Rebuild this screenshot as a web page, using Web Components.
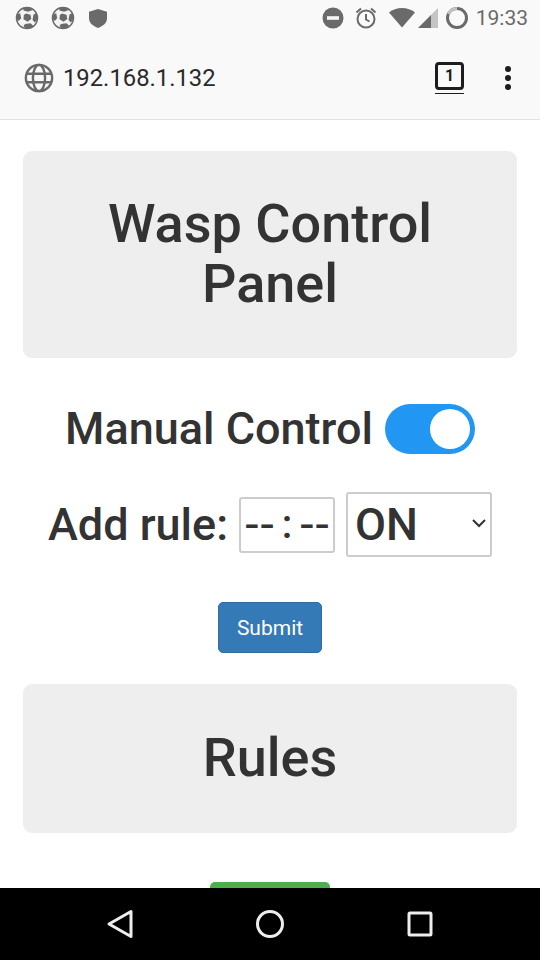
<!DOCTYPE html>
<html>
<head>
<meta charset="utf-8">
<style>
    html, body { margin: 0; padding: 0; }
    body {
        width: 540px;
        height: 960px;
        display: flex;
        flex-direction: column;
        overflow: hidden;
        background: white;
        font-family: Roboto, sans-serif;
    }
    page-content { flex: 1; min-height: 0; }
</style>
</head>
<body>
<status-bar></status-bar>
<url-bar address="192.168.1.132" tabs="1"></url-bar>
<page-content>
    <title-card size="big">Wasp Control<br>Panel</title-card>
    <manual-toggle>Manual Control</manual-toggle>
    <rule-form></rule-form>
    <title-card size="small">Rules</title-card>
    <rule-list></rule-list>
</page-content>
<nav-bar></nav-bar>

<script>
// white ball, dark patches
const BALL = `<svg width="24" height="24" viewBox="0 0 24 24">
    <circle cx="12" cy="12" r="10.500" fill="#f4f4f4" stroke="#6a6a6a" stroke-width="1.500"/>
    <path fill="#6a6a6a" d="M11 7.500l4.500 1.300.8 4.300-3.800 2.700-4-2.600.300-4.300z"/>
    <path fill="#6a6a6a" d="M8 1.800l7.500-.2 1.800 2.700-4.300 1.400-4.500-1.200zM1.800 8.500l3.400-1.200 1 5-2.500 2.600-2-2zM21.500 7l1 6-2.600 3.500-2.400-2.500 1-5.500zM10 18l5.500-.8 2.500 2.300-2 2.500-5.500.2-2-2.200z"/>
</svg>`;

class StatusBar extends HTMLElement {
    constructor(){
        super();
        this.attachShadow({mode: "open"});
    }
    connectedCallback(){
        this.shadowRoot.innerHTML = `
            <style>
                :host{
                    display: flex;
                    flex: none;
                    height: 36px;
                    align-items: center;
                    justify-content: space-between;
                    padding: 0 12px 0 15px;
                    background: #f9f9f9;
                    color: #6a6a6a;
                }
                .side{ display: flex; align-items: center; }
                svg{ display: block; }
                .time{ font: 400 21px Roboto, sans-serif; margin-left: 7px; }
            </style>
            <div class="side" style="gap:12px">
                ${BALL}${BALL}
                <svg width="22" height="24" viewBox="0 0 22 24"><path fill="#6a6a6a" d="M11 3l9 2.800v6.700c0 4.300-4 7.700-9 9.500-5-1.800-9-5.200-9-9.500V5.800z"/></svg>
            </div>
            <div class="side">
                <svg width="24" height="24" viewBox="0 0 24 24"><circle cx="12" cy="12" r="10.500" fill="#6a6a6a"/><rect x="6" y="10.200" width="12" height="3.600" fill="#f5f5f5"/></svg>
                <svg style="margin-left:9px" width="24" height="24" viewBox="0 0 24 24" fill="none" stroke="#6a6a6a" stroke-width="2"><circle cx="12" cy="13" r="8.500"/><path d="M12 8v5.500l3.500 2"/><path d="M2.500 6.500L7 2.500M21.500 6.500L17 2.500"/></svg>
                <svg style="margin-left:10px" width="28" height="22" viewBox="0 0 28 22"><path fill="#6a6a6a" d="M1 5.500C4.500 2.500 9 1 14 1s9.500 1.500 13 4.500L14 20.500z"/></svg>
                <svg style="margin-left:1px" width="22" height="22" viewBox="0 0 22 22"><path fill="#c4c4c4" d="M21 1v20H13V9z"/><path fill="#6a6a6a" d="M14 8v13H1z"/></svg>
                <svg style="margin-left:6px" width="24" height="24" viewBox="0 0 24 24" fill="none" stroke-width="3"><circle cx="12" cy="12" r="9.500" stroke="#6a6a6a"/><path d="M12 2.500A9.500 9.500 0 0 0 3.500 8" stroke="#c4c4c4"/></svg>
                <span class="time">19:33</span>
            </div>
        `;
    }
}

class UrlBar extends HTMLElement {
    constructor(){
        super();
        this.attachShadow({mode: "open"});
    }
    connectedCallback(){
        this.shadowRoot.innerHTML = `
            <style>
                :host{
                    display: flex;
                    flex: none;
                    box-sizing: border-box;
                    height: 84px;
                    align-items: center;
                    padding: 0 0 0 24px;
                    background: #f9f9f9;
                    border-bottom: 1px solid #e2e2e2;
                }
                svg{ display: block; flex: none; }
                .address{
                    flex: 1;
                    margin-left: 9px;
                    font: 400 23.800px Roboto, sans-serif;
                    color: #2a2a2a;
                }
                .tabs{
                    position: relative;
                    box-sizing: border-box;
                    width: 29px;
                    height: 28px;
                    margin-top: -4px;
                    border: 3px solid #1d1d1d;
                    border-radius: 4px;
                    display: grid;
                    place-items: center;
                    font: 700 16px Roboto, sans-serif;
                    color: #1d1d1d;
                }
                .tabs::after{
                    content: "";
                    position: absolute;
                    left: -3px;
                    right: -3px;
                    bottom: -7px;
                    height: 1px;
                    background: #1d1d1d;
                }
                .dots{ margin: 0 28px 0 40px; }
            </style>
            <svg width="30" height="30" viewBox="0 0 32 32" fill="none" stroke="#6a6a6a" stroke-width="2.600">
                <circle cx="16" cy="16" r="14"/>
                <ellipse cx="16" cy="16" rx="6.500" ry="14"/>
                <path d="M3 11.500h26M3 20.500h26"/>
            </svg>
            <span class="address">${this.getAttribute("address")}</span>
            <div class="tabs">${this.getAttribute("tabs")}</div>
            <svg class="dots" width="8" height="26" viewBox="0 0 8 26" fill="#1d1d1d"><circle cx="4" cy="4" r="3"/><circle cx="4" cy="13" r="3"/><circle cx="4" cy="22" r="3"/></svg>
        `;
    }
}

class PageContent extends HTMLElement {
    constructor(){
        super();
        this.attachShadow({mode: "open"});
    }
    connectedCallback(){
        this.shadowRoot.innerHTML = `
            <style>
                :host{
                    display: flex;
                    flex-direction: column;
                    box-sizing: border-box;
                    padding: 31px 23px 0;
                    overflow: hidden;
                    color: #333;
                    background: white;
                }
            </style>
            <slot></slot>
        `;
    }
}

class TitleCard extends HTMLElement {
    constructor(){
        super();
        this.attachShadow({mode: "open"});
    }
    connectedCallback(){
        this.shadowRoot.innerHTML = `
            <style>
                :host{
                    display: block;
                    flex: none;
                    background: #eee;
                    border-radius: 9px;
                    text-align: center;
                    font: 500 54px/60px Roboto, sans-serif;
                    color: #333;
                }
                :host([size="big"]){ padding: 43px 0 44px; margin-bottom: 42px; }
                :host([size="small"]){ padding: 44px 0 45px; }
            </style>
            <slot></slot>
        `;
    }
}

class ManualToggle extends HTMLElement {
    constructor(){
        super();
        this.attachShadow({mode: "open"});
    }
    connectedCallback(){
        this.shadowRoot.innerHTML = `
            <style>
                :host{
                    display: flex;
                    flex: none;
                    box-sizing: border-box;
                    height: 58px;
                    padding-bottom: 2px;
                    align-items: center;
                    justify-content: center;
                    gap: 12px;
                    font: 500 45px Roboto, sans-serif;
                    color: #333;
                }
                .track{
                    position: relative;
                    width: 90px;
                    height: 50px;
                    margin-top: 2px;
                    border-radius: 25px;
                    background: #2196f3;
                }
                .knob{
                    position: absolute;
                    top: 5px;
                    right: 5px;
                    width: 40px;
                    height: 40px;
                    border-radius: 50%;
                    background: white;
                }
            </style>
            <slot></slot>
            <div class="track"><div class="knob"></div></div>
        `;
    }
}

class RuleForm extends HTMLElement {
    constructor(){
        super();
        this.attachShadow({mode: "open"});
    }
    connectedCallback(){
        this.shadowRoot.innerHTML = `
            <style>
                :host{
                    display: flex;
                    flex: none;
                    flex-direction: column;
                    align-items: center;
                    margin-top: 34px;
                    margin-bottom: 31px;
                    font: 500 45px Roboto, sans-serif;
                    color: #333;
                }
                .row{
                    display: flex;
                    align-items: center;
                    height: 65px;
                    margin-bottom: 45px;
                }
                .time{
                    box-sizing: border-box;
                    width: 96px;
                    height: 56px;
                    margin-left: 11px;
                    border: 2px solid #ccc;
                    border-radius: 3px;
                    display: flex;
                    align-items: center;
                    justify-content: center;
                    gap: 8px;
                    font: 400 48px/50px Roboto, sans-serif;
                }
                .time span{ letter-spacing: 2px; margin-right: -2px; }
                .time b{ font: 500 40px/50px Roboto, sans-serif; }
                .state{
                    position: relative;
                    box-sizing: border-box;
                    width: 146px;
                    height: 65px;
                    margin-left: 11px;
                    padding-left: 7px;
                    border: 2px solid #ccc;
                    border-radius: 3px;
                    display: flex;
                    align-items: center;
                }
                .state svg{ position: absolute; right: 3px; top: 24px; }
                .submit{
                    box-sizing: border-box;
                    width: 104px;
                    height: 51px;
                    display: grid;
                    place-items: center;
                    background: #337ab7;
                    border: 1px solid #2e6da4;
                    border-radius: 5px;
                    color: white;
                    font: 400 21px Roboto, sans-serif;
                }
            </style>
            <div class="row">
                <span>Add rule:</span>
                <div class="time"><span>--</span><b>:</b><span>--</span></div>
                <div class="state">ON
                    <svg width="16" height="10" viewBox="0 0 16 10" fill="none" stroke="#333" stroke-width="2"><path d="M2 2l6 6 6-6"/></svg>
                </div>
            </div>
            <div class="submit">Submit</div>
        `;
    }
}

class RuleList extends HTMLElement {
    constructor(){
        super();
        this.attachShadow({mode: "open"});
    }
    connectedCallback(){
        this.shadowRoot.innerHTML = `
            <style>
                :host{
                    display: flex;
                    flex: none;
                    justify-content: center;
                    margin-top: 49px;
                }
                .bar{
                    width: 120px;
                    height: 51px;
                    background: #4cae4c;
                    border-radius: 5px;
                }
            </style>
            <div class="bar"></div>
        `;
    }
}

class NavBar extends HTMLElement {
    constructor(){
        super();
        this.attachShadow({mode: "open"});
    }
    connectedCallback(){
        this.shadowRoot.innerHTML = `
            <style>
                :host{
                    display: grid;
                    flex: none;
                    box-sizing: border-box;
                    grid-template-columns: repeat(3, 150px);
                    justify-content: center;
                    place-items: center;
                    height: 72px;
                    padding-bottom: 1px;
                    background: black;
                }
                svg{ display: block; }
            </style>
            <svg width="30" height="30" viewBox="0 0 30 30" fill="none" stroke="#eee" stroke-width="3" stroke-linejoin="round"><path d="M26 2.500v25L4 15z"/></svg>
            <svg width="30" height="30" viewBox="0 0 30 30" fill="none" stroke="#eee" stroke-width="3"><circle cx="15" cy="15" r="12.500"/></svg>
            <svg width="30" height="30" viewBox="0 0 30 30" fill="none" stroke="#eee" stroke-width="3" stroke-linejoin="round"><rect x="4" y="4" width="22" height="22" rx="1"/></svg>
        `;
    }
}

customElements.define("status-bar", StatusBar);
customElements.define("url-bar", UrlBar);
customElements.define("page-content", PageContent);
customElements.define("title-card", TitleCard);
customElements.define("manual-toggle", ManualToggle);
customElements.define("rule-form", RuleForm);
customElements.define("rule-list", RuleList);
customElements.define("nav-bar", NavBar);
</script>
</body>
</html>
